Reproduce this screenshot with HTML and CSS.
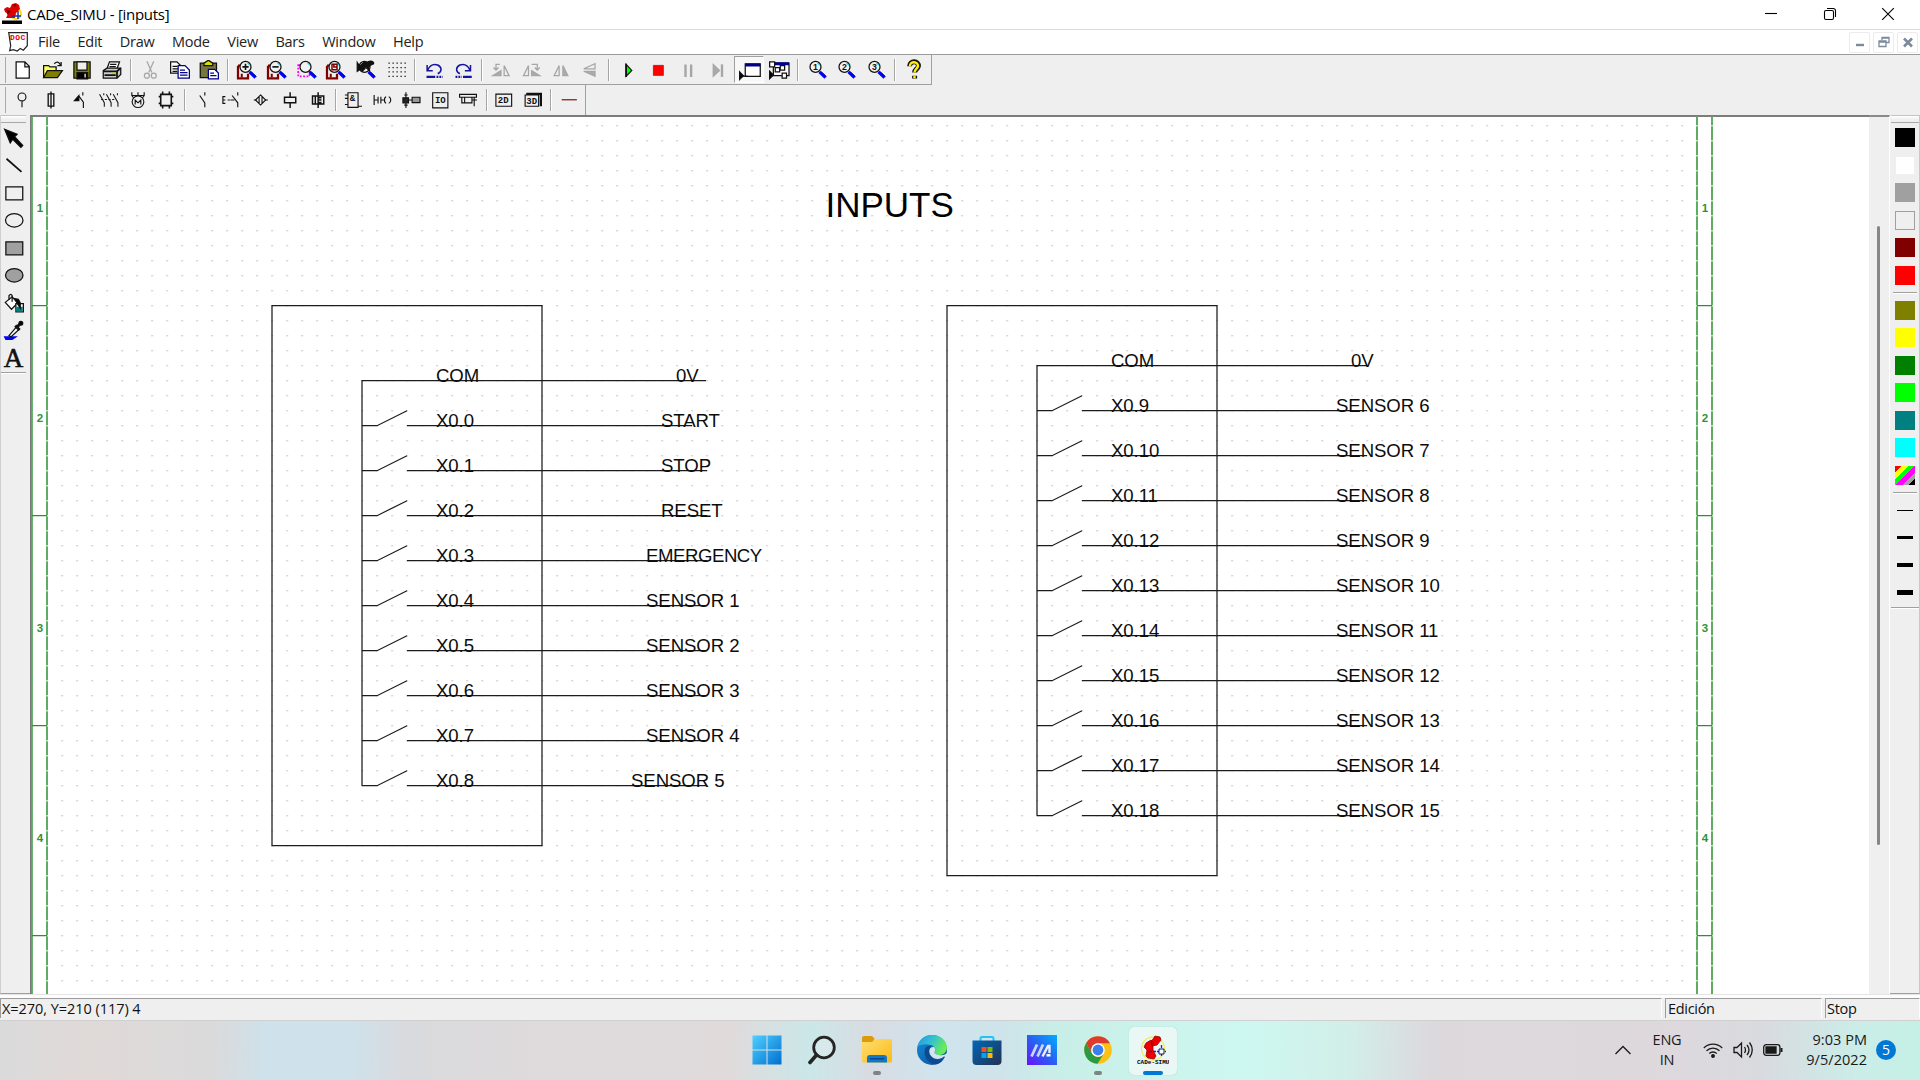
FILE: index.html
```html
<!DOCTYPE html>
<html lang="en">
<head>
<meta charset="utf-8">
<title>CADe_SIMU - [inputs]</title>
<link rel="stylesheet" href="styles.css">
</head>
<body>
<svg class="defs" width="0" height="0">
  <defs>
    <g id="lens"><path d="M10 9.500l4.800 4.600" stroke="#00f" stroke-width="2.400"/><path d="M11.500 9.500l4 3.800" stroke="#008" stroke-width=".8"/><circle cx="6.800" cy="5.500" r="4.400" fill="#f2f2f2"/><path d="M8.500 2.300l2 2" stroke="#0cc"/></g>
    <g id="sheet"><path d="M.8 4.500v10.200h8V11M.8 4.500H3" stroke="#800000" stroke-width="1.800"/><path d="M3.800 14v-3" stroke="#800000" stroke-width="1.600"/></g>
    <g id="switch"><path d="M0 0h15l30-15M45 0h285"/></g>
    <linearGradient id="win" x1="0" y1="0" x2="1" y2="1"><stop stop-color="#4fd0ff"/><stop offset="1" stop-color="#006fd0"/></linearGradient>
    <linearGradient id="folder" x1="0" y1="0" x2="1" y2="1"><stop stop-color="#ffdf70"/><stop offset="1" stop-color="#fbb917"/></linearGradient>
    <linearGradient id="edgeTop" x1="0" y1="0" x2="1" y2=".4"><stop stop-color="#2394dc"/><stop offset=".5" stop-color="#32bfd5"/><stop offset="1" stop-color="#69ec55"/></linearGradient>
    <linearGradient id="edgeLow" x1="0" y1="0" x2="1" y2="1"><stop stop-color="#168fdc"/><stop offset="1" stop-color="#0c4a91"/></linearGradient>
    <linearGradient id="store" x1="0" y1="0" x2="1" y2="1"><stop stop-color="#0067b8"/><stop offset="1" stop-color="#243251"/></linearGradient>
    <linearGradient id="my" x1="0" y1="1" x2="1" y2="0"><stop stop-color="#6a12ff"/><stop offset=".5" stop-color="#2860f2"/><stop offset="1" stop-color="#00aeff"/></linearGradient>
    <pattern id="dots" x="61.300" y="125.300" width="15" height="15" patternUnits="userSpaceOnUse"><rect width="1.600" height="1.400" fill="#c9c9c9"/></pattern>
  </defs>
</svg>

<header class="titlebar">
  <svg class="logo" width="20" height="21" viewBox="0 0 20 21"><circle cx="14" cy="11" r="5" fill="none" stroke="#fd0" stroke-width="2"/><path d="M2 6l3-2 3 1 2-4 4-1 3 2 1 4-4 4-1 5H4l2-4-3-2z" fill="#e00000"/><path d="M11 2l3-1-1 3zM5 7l4 1-4 4z" fill="#600"/><path d="M10 13h9M16 8v8" stroke="#13b" stroke-width="1.500"/><path d="M0 17.500h20V21H0z"/></svg>
  <span class="title-text">CADe_SIMU - [inputs]</span>
  <div class="win-controls">
    <svg width="14" height="14" viewBox="0 0 14 14"><path d="M1 6.500h12"/></svg>
    <svg width="14" height="14" viewBox="0 0 14 14"><rect x="1.500" y="3.500" width="9" height="9" rx="1.500"/><path d="M4 1.500h6.200a2.300 2.300 0 0 1 2.300 2.300V10"/></svg>
    <svg width="14" height="14" viewBox="0 0 14 14"><path d="M1.200 1.200l11.600 11.600M12.800 1.200L1.200 12.800"/></svg>
  </div>
</header>

<nav class="menubar">
  <svg class="doc" width="20" height="20" viewBox="0 0 20 20"><path d="M.7.7h18.600v13l-4 4.500-3-1.800-3 2.600-4-1.400-3.600 1 1-5z" fill="#fff" stroke="#222" stroke-width="1.200"/><text x="2" y="8">DOC</text></svg>
  <ul class="menu"><li>File</li><li>Edit</li><li>Draw</li><li>Mode</li><li>View</li><li>Bars</li><li>Window</li><li>Help</li></ul>
  <div class="mdi">
    <span><svg width="12" height="12" viewBox="0 0 12 12"><path d="M2 9h8" stroke-width="2.400"/></svg></span>
    <span><svg width="12" height="12" viewBox="0 0 12 12"><path d="M1 5h7v5.500H1zM1 6h7M4 4V1.500h7v5H8.500M4 2.200h7" stroke-width="1.300"/></svg></span>
    <span><svg width="12" height="12" viewBox="0 0 12 12"><path d="M2 2.500l8 8M10 2.500l-8 8" stroke-width="2.600"/></svg></span>
  </div>
</nav>

<section class="bar bar-main">
  <div class="tools">
    <i><svg viewBox="0 0 16 16"><path d="M2.500 1.500h7l3.500 3.500v9.500h-10.500zM9.500 1.500v4h3.500" fill="#fff"/></svg></i>
    <i><svg viewBox="0 0 16 16"><path d="M.5 14V4.500h4l1 1h5V8" fill="#ff6"/><path d="M.5 14l3-5.500h12l-4 5.500z" fill="#808000"/><path d="M9 3q3-3 5 1M14.500 1.500V4.500h-3"/></svg></i>
    <i><svg viewBox="0 0 16 16"><path d="M1.500 1.500h13v13h-13z" fill="#808000"/><path d="M4 1.500h8v6.500H4z" fill="#eee"/><path d="M4 10h8.500v5H4z" fill="#000"/><path d="M10.500 11v3" stroke="#fff"/></svg></i>
    <i><svg viewBox="0 0 16 16"><path d="M4 7l2-5.500h8L12 7" fill="#fff"/><path d="M6.500 3.500h5M6 5.200h5"/><path d="M1 8.500L4 6.500h11v5l-3 3H1z" fill="#ccc"/><path d="M1 9h11v5.500M12 9l3-2.500M2 12h9" stroke-width="1.400"/><path d="M8 10.500h3" stroke="#cc0"/></svg></i>
  </div>
  <b class="sep"></b>
  <div class="tools">
    <i><svg class="off" viewBox="0 0 16 16"><path d="M5.500 1l4 9M11 1L7 10"/><circle cx="5.500" cy="12.500" r="2"/><circle cx="11" cy="12.500" r="2"/></svg></i>
    <i><svg viewBox="0 0 16 16"><path d="M.5 1.500h5l3 3v6h-8zM2 5h4M2 7h5M2 9h4" fill="#fff"/><path d="M6.500 4.500h5.500l3.500 3.500v6.500h-9zM8 8h4M8 10h6M8 12h6" fill="#fff" stroke="#008"/></svg></i>
    <i><svg viewBox="0 0 16 16"><path d="M1 2.500h13V14H1z" fill="#77773b"/><path d="M4 4.500V2.500l3-2h1l3 2v2z" fill="#dd0"/><path d="M7.500 7.500h5l3 3v4.500h-8zM9 10.500h3M9 12.500h5" fill="#fff" stroke="#008"/></svg></i>
  </div>
  <b class="sep"></b>
  <div class="tools">
    <i><svg viewBox="0 0 16 16"><use href="#sheet"/><use href="#lens"/><path d="M4.300 5.500h5M6.800 3v5" stroke-width="1.300"/></svg></i>
    <i><svg viewBox="0 0 16 16"><use href="#sheet"/><use href="#lens"/><path d="M4.300 5.500h5" stroke-width="1.300"/></svg></i>
    <i><svg viewBox="0 0 16 16"><path d="M1 4h9v9H1z" stroke="#f0f" stroke-dasharray="1.500 1.200" stroke-width="1.400"/><use href="#lens"/></svg></i>
    <i><svg viewBox="0 0 16 16"><use href="#sheet"/><use href="#lens"/><path d="M4.800 3.300h4v4.400h-4zM6.300 3.500v2H9" stroke="#800000" stroke-width="1.200"/></svg></i>
    <i><svg viewBox="0 0 16 16"><use href="#lens"/><path d="M1 2v7l3-2 1 2 2-2-1-1c2-1 3 1 5 3l-1-3c1-3 5-2 4-4-1-2-4-1-5 0L6 2 3 5z" fill="#111"/></svg></i>
    <i><svg viewBox="0 0 16 16"><path d="M2 2.500h14M2 6h14M2 9.500h14M2 13h14" stroke-dasharray="1 2.200" stroke-width="1"/></svg></i>
  </div>
  <b class="sep"></b>
  <div class="tools">
    <i><svg class="navy" viewBox="0 0 16 16"><path d="M2.500 4v4.500h4.500M3 8c2-4.500 5-5 8-4 3.500 2 3.500 5 0 7"/><path d="M2 13.500h7" stroke-width="1.800"/><path d="M10 13.500h5" stroke-width="1.800" stroke-dasharray="1.500 .8"/></svg></i>
    <i><svg class="navy" viewBox="0 0 16 16"><path d="M14 4v4.500H9.500M13.500 8c-2-4.500-5-5-8-4-3.500 2-3.500 5 0 7"/><path d="M8 13.500h7" stroke-width="1.800"/><path d="M2 13.500h5" stroke-width="1.800" stroke-dasharray="1.500 .8"/></svg></i>
  </div>
  <b class="sep"></b>
  <div class="tools">
    <i><svg class="off" viewBox="0 0 16 16"><path d="M1.500 12.500h6.500v-4z" fill="#aaa"/><path d="M10.500 12.500v-8l4 8zM7 3.500H4v4M2 6l2 2 2-2"/></svg></i>
    <i><svg class="off" viewBox="0 0 16 16"><path d="M8.500 12.500h6.500l-6.500-4z" fill="#aaa"/><path d="M6 12.500v-8l-4 8zM8.500 3.500H13v4M11 6l2 2 2-2"/></svg></i>
    <i><svg class="off" viewBox="0 0 16 16"><path d="M6.500 12.500v-8l-4 8z"/><path d="M9.500 12.500v-8l4 8z" fill="#aaa"/></svg></i>
    <i><svg class="off" viewBox="0 0 16 16"><path d="M12 7V3L3 7z"/><path d="M12 9v4L3 9z" fill="#aaa"/></svg></i>
  </div>
  <b class="sep"></b>
  <div class="tools">
    <i><svg viewBox="0 0 16 16"><path d="M6.500 3.500l4.500 4.800L6.500 13z" fill="#0f0"/><path d="M6.500 3v10.500" stroke-width="1.400"/></svg></i>
    <i><svg viewBox="0 0 16 16"><path d="M4.300 4.300h8v8h-8z" fill="#f00" stroke="#c00" stroke-width=".6"/></svg></i>
    <i><svg class="off" viewBox="0 0 16 16"><path d="M6 3.500v10M10.500 3.500v10" stroke-width="1.900"/></svg></i>
    <i><svg class="off" viewBox="0 0 16 16"><path d="M5 3.500l5 4.800-5 4.700z" fill="#aaa"/><path d="M12 3.500v10" stroke-width="1.900"/></svg></i>
  </div>
  <div class="tools modes">
    <i class="pressed"><svg viewBox="0 0 16 16"><path d="M5 3h12v10H5z" fill="#fff"/><path d="M5 4h12" stroke="#008" stroke-width="2.400"/><path d="M.5 9.500l3 3-3 3z" fill="#000"/><path d="M2.500 13H7"/></svg></i>
    <i><svg viewBox="0 0 16 16"><path d="M3.500 2.500h12.500v10H3.500z" fill="#fff"/><path d="M3.500 3h12.500" stroke="#008" stroke-width="2.400"/><path d="M.5 1.500h4v4h-4zM5 6h3.500v3.500H5zM9 4.500h3.500V8H9zM10.500 10.500h3.500v4h-3.500z" fill="#fff"/><path d="M.5 9l3 3-3 3z" fill="#000"/></svg></i>
  </div>
  <b class="sep"></b>
  <div class="tools">
    <i><svg viewBox="0 0 16 16"><use href="#lens"/><text x="4.700" y="8.200">1</text></svg></i>
    <i><svg viewBox="0 0 16 16"><use href="#lens"/><text x="4.700" y="8.200">2</text></svg></i>
    <i><svg viewBox="0 0 16 16"><use href="#lens"/><text x="4.700" y="8.200">3</text></svg></i>
  </div>
  <b class="sep"></b>
  <div class="tools">
    <i><svg viewBox="0 0 16 16"><path d="M4.500 5c0-5 7.500-4.500 7 0-.3 2-3 2.500-3 5M8.500 12.500v2.200" stroke-width="4"/><path d="M4.700 5c0-4.500 6.800-4 6.500 0-.3 2-2.800 2.500-2.800 5M8.400 12.500v2" stroke="#fe0" stroke-width="1.900"/></svg></i>
  </div>
</section>

<section class="bar bar-parts">
  <div class="tools">
    <i><svg viewBox="0 0 16 16"><circle cx="8" cy="5.300" r="3.500"/><path d="M8 9v5.500"/></svg></i>
    <i><svg viewBox="0 0 16 16"><path d="M5.500 2.500h5v11h-5zM8 .5V15.500" stroke-width="1.200"/></svg></i>
    <i><svg viewBox="0 0 16 16"><path d="M10.500 1v3M7 4.500l4 5.500v5"/><path d="M7 4v4.500H3z" fill="#000"/></svg></i>
    <i><svg class="wide" viewBox="0 0 20 16"><path d="M5.500 1.500v2M1.500 2.500l4.500 8v4M12 1.500v2M8 2.500l4.500 8v4M18.500 1.500v2M14.500 2.500l4.500 8v4"/><path d="M3 7.500h13" stroke-dasharray="2 1.500"/></svg></i>
    <i><svg viewBox="0 0 16 16"><circle cx="8" cy="9.500" r="5.200"/><path d="M2.500 1v3l1.500 2M8 1v3.500M13.500 1v3l-1.500 2M2.500 4h11M5.500 12V8L8 10.500 10.500 8v4"/></svg></i>
    <i><svg viewBox="0 0 16 16"><path d="M3.300 3h9.400v10H3.300zM5 .5V3M11 .5V3M5 13v2.500M11 13v2.500M1.500 5H3M13 5h1.500M1.500 11H3M13 11h1.500" stroke-width="1.400"/></svg></i>
  </div>
  <b class="sep"></b>
  <div class="tools">
    <i><svg viewBox="0 0 16 16"><path d="M10.500 1v3M6 4l4.500 6.500v4"/></svg></i>
    <i><svg viewBox="0 0 16 16"><path d="M3 5H.8v6H3M.8 8H3M5 8h2M14 1v3M9 4l5 6.500v4M7.500 8h3.500"/></svg></i>
    <i><svg viewBox="0 0 16 16"><path d="M2.500 8H5M12.500 8H15"/><path d="M8.500 3.500L13 8l-4.500 4.500L4 8zM7.200 5v6M9.800 5v6"/></svg></i>
    <i><svg viewBox="0 0 16 16"><path d="M4 5.500h10v5H4zM9 1v4.500M9 10.500v4.500" stroke-width="1.300"/></svg></i>
    <i><svg viewBox="0 0 16 16"><path d="M4 4.500h10v7H4zM6.500 4.500v7M9 1v14M9 6h3M9 8h3M9 10.300h3" stroke-width="1.300"/></svg></i>
  </div>
  <b class="sep"></b>
  <div class="tools">
    <i><svg viewBox="0 0 16 16"><path d="M3.500 1.500h9v13h-9zM.8 3.500h2.700M.8 6.500h2.700M.8 12h2.700M12.500 13.500H16"/><text class="fine" x="5" y="8.500">&amp;</text></svg></i>
    <i><svg viewBox="0 0 16 16"><path d="M1 3.500v9M1 8h3.500M4.500 5v6M7 5v6M7 8h3"/><path d="M11.500 5l-1.200 1.500v3l1.200 1.500M14 5q1.800 1 1.800 3t-1.800 3"/></svg></i>
    <i><svg viewBox="0 0 16 16"><path d="M3.500 1v14M2 3.500h3M2 12.500h3M6 8h3"/><path d="M.8 6h5v4.500h-5z" fill="#222"/><path d="M9 5.500h7v4.800H9z" fill="#999"/></svg></i>
    <i><svg viewBox="0 0 16 16"><path d="M1.500 1.500h13.500v13.500H1.500z"/><text class="fine" x="3.500" y="11">IO</text></svg></i>
    <i><svg viewBox="0 0 16 16"><path d="M.5 3h15v2.500H.5zM2.500 5.500v5h9v-5M5 5.500v5M11.500 8h4.500M13.500 5.500v8"/></svg></i>
  </div>
  <b class="sep"></b>
  <div class="tools">
    <i><svg viewBox="0 0 16 16"><path d="M.8 2.800h14v10.700H.8z"/><text class="fine" x="2.500" y="11">2D</text></svg></i>
    <i><svg viewBox="0 0 16 16"><path d="M1 3.500h12v10H1z"/><path d="M2 2.500h13v11" stroke-width="2"/><text class="fine" x="2" y="11.500">3D</text></svg></i>
  </div>
  <b class="sep"></b>
  <div class="tools"><i><svg viewBox="0 0 16 16"><path d="M1.500 7.800h13.500" stroke="#800000"/></svg></i></div>
</section>

<main class="workspace">
  <aside class="palette draw">
    <div class="grip"></div>
    <i><svg viewBox="0 0 16 16"><path d="M.5 1l10 4-2 2 6.500 7-1.500 1.500-6.500-6.500-2 3z" fill="#000"/></svg></i>
    <i><svg viewBox="0 0 16 16"><path d="M2 3l12 10.500" stroke-width="1.400"/></svg></i>
    <i><svg viewBox="0 0 16 16"><path d="M1.500 3h13.500v10.500H1.500z"/></svg></i>
    <i><svg viewBox="0 0 16 16"><ellipse cx="8.200" cy="8.200" rx="7" ry="5.400"/></svg></i>
    <i><svg viewBox="0 0 16 16"><path d="M1.500 3h13.500v10.500H1.500z" fill="#a0a0a0"/></svg></i>
    <i><svg viewBox="0 0 16 16"><ellipse cx="8.200" cy="8.200" rx="7" ry="5.400" fill="#a0a0a0"/></svg></i>
    <i><svg viewBox="0 0 16 16"><path d="M1 7.500l5.500-4.500 4.500 5-5 5z" fill="#fff"/><path d="M4 5.500V2q1.500-2 2.500 0v5"/><path d="M9.500 8.500h6v6.500h-6z" fill="#fff"/><path d="M10 11h5v3.500H9z" fill="#008080" stroke="none"/><path d="M8.500 4.500l3 .5 1.500 3v4l-2-3z" fill="#000"/></svg></i>
    <i><svg viewBox="0 0 16 16"><path d="M.5 13.500h9l-3 2h-5z" fill="#00f" stroke="#00f"/><path d="M4 12.500l6-7 2 2-6.500 6z" fill="#fff"/><path d="M9 4.500l3.500 3.500M10.500 5.500L14 2" stroke-width="2.300"/><circle cx="13.500" cy="2.500" r="1.500" fill="#000"/></svg></i>
    <i class="letter">A</i>
    <div class="end"></div>
  </aside>

  <svg class="sheet" viewBox="30 115 1839 879" width="1839" height="879">
    <path class="edge" d="M30.500 994V116H1869"/>
    <g transform="translate(0 -.3)">
      <rect x="55" y="120" width="1635" height="870" fill="url(#dots)"/>
      <g class="frame">
        <path d="M32 117v878"/>
        <path class="under" d="M47 117v878M1697 117v878M1712 117v878"/>
        <path class="dash" d="M47 117v878M1697 117v878M1712 117v878"/>
        <path class="tick" d="M32 306h15M32 516h15M32 726h15M32 936h15M1697 306h15M1697 516h15M1697 726h15M1697 936h15"/>
      </g>
      <g class="rows">
        <text x="40" y="212.300">1</text><text x="40" y="422.300">2</text><text x="40" y="632.300">3</text><text x="40" y="842.300">4</text>
        <text x="1705" y="212.300">1</text><text x="1705" y="422.300">2</text><text x="1705" y="632.300">3</text><text x="1705" y="842.300">4</text>
      </g>
      <g class="wire">
        <path d="M272 306h270v540H272zM362 786V381H706"/>
        <path d="M362 426h15l30-15M407 426h285"/>
        <use href="#switch" x="362" y="471"/><use href="#switch" x="362" y="516"/><use href="#switch" x="362" y="561"/><use href="#switch" x="362" y="606"/><use href="#switch" x="362" y="651"/><use href="#switch" x="362" y="696"/><use href="#switch" x="362" y="741"/><use href="#switch" x="362" y="786"/>
        <path d="M692 471h15M692 516h15M692 561h15M692 606h15M692 651h15M692 696h15M692 741h15M692 786h15"/>
        <path d="M947 306h270v570H947zM1037 816V366h330"/>
        <use href="#switch" x="1037" y="411"/><use href="#switch" x="1037" y="456"/><use href="#switch" x="1037" y="501"/><use href="#switch" x="1037" y="546"/><use href="#switch" x="1037" y="591"/><use href="#switch" x="1037" y="636"/><use href="#switch" x="1037" y="681"/><use href="#switch" x="1037" y="726"/><use href="#switch" x="1037" y="771"/><use href="#switch" x="1037" y="816"/>
      </g>
      <text class="heading" x="825.500" y="217.800">INPUTS</text>
      <g class="label">
        <text x="436" y="382.800">COM</text><text x="676" y="382.800">0V</text>
        <text x="436" y="427.800">X0.0</text><text x="661" y="427.800">START</text>
        <text x="436" y="472.800">X0.1</text><text x="661" y="472.800">STOP</text>
        <text x="436" y="517.800">X0.2</text><text x="661" y="517.800">RESET</text>
        <text x="436" y="562.800">X0.3</text><text class="tight" x="646" y="562.800">EMERGENCY</text>
        <text x="436" y="607.800">X0.4</text><text x="646" y="607.800">SENSOR 1</text>
        <text x="436" y="652.800">X0.5</text><text x="646" y="652.800">SENSOR 2</text>
        <text x="436" y="697.800">X0.6</text><text x="646" y="697.800">SENSOR 3</text>
        <text x="436" y="742.800">X0.7</text><text x="646" y="742.800">SENSOR 4</text>
        <text x="436" y="787.800">X0.8</text><text x="631" y="787.800">SENSOR 5</text>
        <text x="1111" y="367.800">COM</text><text x="1351" y="367.800">0V</text>
        <text x="1111" y="412.800">X0.9</text><text x="1336" y="412.800">SENSOR 6</text>
        <text x="1111" y="457.800">X0.10</text><text x="1336" y="457.800">SENSOR 7</text>
        <text x="1111" y="502.800">X0.11</text><text x="1336" y="502.800">SENSOR 8</text>
        <text x="1111" y="547.800">X0.12</text><text x="1336" y="547.800">SENSOR 9</text>
        <text x="1111" y="592.800">X0.13</text><text x="1336" y="592.800">SENSOR 10</text>
        <text x="1111" y="637.800">X0.14</text><text x="1336" y="637.800">SENSOR 11</text>
        <text x="1111" y="682.800">X0.15</text><text x="1336" y="682.800">SENSOR 12</text>
        <text x="1111" y="727.800">X0.16</text><text x="1336" y="727.800">SENSOR 13</text>
        <text x="1111" y="772.800">X0.17</text><text x="1336" y="772.800">SENSOR 14</text>
        <text x="1111" y="817.800">X0.18</text><text x="1336" y="817.800">SENSOR 15</text>
      </g>
    </g>
  </svg>

  <div class="scroll"><div class="thumb"></div></div>

  <aside class="palette colors">
    <div class="grip"></div>
    <i><b class="sw black"></b></i><i><b class="sw white"></b></i><i><b class="sw gray"></b></i><i><b class="sw none"></b></i><i><b class="sw maroon"></b></i><i><b class="sw red"></b></i>
    <div class="rule"></div>
    <i><b class="sw olive"></b></i><i><b class="sw yellow"></b></i><i><b class="sw green"></b></i><i><b class="sw lime"></b></i><i><b class="sw teal"></b></i><i><b class="sw cyan"></b></i><i><b class="sw multi"></b></i>
    <div class="rule"></div>
    <i><b class="ln l1"></b></i><i><b class="ln l2"></b></i><i><b class="ln l3"></b></i><i><b class="ln l4"></b></i>
    <div class="end"></div>
  </aside>
</main>

<footer class="status">
  <div class="pane coords">X=270, Y=210 (117) 4</div>
  <div class="pane mode">Edición</div>
  <div class="pane state">Stop</div>
</footer>

<div class="taskbar">
  <div class="apps">
    <div class="app"><svg width="30" height="30" viewBox="0 0 30 30"><path d="M.5.5h14v14H.5zM15.500.5h14v14h-14zM.5 15.500h14v14H.5zM15.500 15.500h14v14h-14z" fill="url(#win)"/></svg></div>
    <div class="app"><svg width="30" height="30" viewBox="0 0 30 30"><circle cx="17" cy="12.500" r="10.300" fill="#ffffff30" stroke="#252525" stroke-width="2.800"/><path d="M9.500 20L3 27.500" stroke="#252525" stroke-width="3.600" stroke-linecap="round"/></svg></div>
    <div class="app running"><svg width="30" height="30" viewBox="0 0 30 30"><path d="M0 3a2 2 0 0 1 2-2h8l3 3h-1v5H0z" fill="#dc9b0b"/><path d="M0 7h10l3-3h15a2 2 0 0 1 2 2v20a1.500 1.500 0 0 1-1.500 1.500h-27A1.500 1.500 0 0 1 0 26z" fill="url(#folder)"/><path d="M5 27.500V23a3 3 0 0 1 3-3h14a3 3 0 0 1 3 3v4.500z" fill="#0f78c8"/><path d="M8.500 23.800h13" stroke="#07488a" stroke-width="1.500" stroke-linecap="round"/></svg></div>
    <div class="app"><svg width="30" height="30" viewBox="0 0 30 30"><circle cx="15" cy="15" r="15" fill="url(#edgeLow)"/><path d="M.3 12C2 4 8 0 15 0c9 0 15 6 15 12.500 0 5-4 7.500-8 7.500-3 0-5-1-4.500-2.500 1.500-1.800 1-6-3.500-7.500C9 8.500 3 9 .3 12z" fill="url(#edgeTop)"/><path d="M17 12c-5-.5-6 5-3 9 3 3.500 9 4 12.500.8 1-.8 1.800 0 1.200 1L25 26l5 4V18c-2 2-5 2.500-8 2-4-.5-5-2-4.300-3 .8-1.500.5-4-.7-5z" fill="#d3e4ee"/><path d="M8 14c-2 7 3 15 11 15.500 3-.5 6-3 8-6-7 3.500-15-.5-15-7.500 0-3 2-5 4-5-4-1-7 0-8 3z" fill="#0d4b90"/></svg></div>
    <div class="app"><svg width="30" height="30" viewBox="0 0 30 30"><path d="M8.500 7V3.500A1.500 1.500 0 0 1 10 2h10a1.500 1.500 0 0 1 1.500 1.500V7" fill="none" stroke="#20c5f5" stroke-width="2"/><path d="M.5 5.500h29V26a4 4 0 0 1-4 4h-21a4 4 0 0 1-4-4z" fill="url(#store)"/><path d="M9.500 12h5v5h-5z" fill="#f25022"/><path d="M15.500 12h5v5h-5z" fill="#7fba00"/><path d="M9.500 18h5v5h-5z" fill="#00a4ef"/><path d="M15.500 18h5v5h-5z" fill="#ffb900"/></svg></div>
    <div class="app"><svg width="30" height="30" viewBox="0 0 30 30"><path d="M0 0h30v30H0z" fill="url(#my)"/><path d="M4.500 21.500L10 9.500M10.500 21.500L16 9.500" stroke="#c9d5ff" stroke-width="2.800"/><path d="M15.500 21.500L21 11h1.500v7" fill="none" stroke="#eef" stroke-width="2.400"/><path d="M19.500 20.300h4" stroke="#fff" stroke-width="2.500"/></svg></div>
    <div class="app running"><svg width="30" height="30" viewBox="0 0 30 30"><circle cx="15" cy="15" r="13.800" fill="#fbc116"/><path d="M3 8.200A13.800 13.800 0 0 1 27 8.200H15a7 7 0 0 0-6 10.300z" fill="#df3a2e"/><path d="M3 8.200A13.800 13.800 0 0 0 14.500 28.800L21 18.500A7 7 0 0 1 9 18.500z" fill="#2a9a45"/><circle cx="15" cy="15" r="6.800" fill="#fff"/><circle cx="15" cy="15" r="5.400" fill="#3c7ef0"/></svg></div>
    <div class="app active"><svg width="32" height="30" viewBox="0 0 32 30"><circle cx="16" cy="13.500" r="11.500" fill="none" stroke="#f2ec55" stroke-width="1.300"/><path d="M9 8l5-3 2 2v8l3 6-2 3-6-1-2-2 1-6-3-3zM18 1l5 1 1 3-4 5-5 1-1-4z" fill="#e00" stroke="#900" stroke-width=".8"/><path d="M12 16.500h17M24.500 10v11" stroke="#22c" stroke-width="1.300" stroke-dasharray="3 1"/><path d="M22 14h5v5h-5z" fill="#fff" stroke="#118"/><text x="0" y="29">CADe-SIMU</text></svg></div>
  </div>
  <div class="tray">
    <svg class="chev" width="18" height="12" viewBox="0 0 18 12"><path d="M1.500 10L9 2.500l7.500 7.500"/></svg>
    <div class="lang">ENG<br>IN</div>
    <svg class="wifi" width="20" height="16" viewBox="0 0 20 16"><path d="M.8 6a13 13 0 0 1 18.400 0M3.500 8.800a9.200 9.200 0 0 1 13 0M6.300 11.500a5.300 5.300 0 0 1 7.400 0"/><circle cx="10" cy="14" r="1.300" fill="#1a1a1a"/></svg>
    <svg class="vol" width="20" height="18" viewBox="0 0 20 18"><path d="M1 6.500h3L8.500 2v14L4 11.500H1zM11.500 6q2 3 0 6M14 4q4 5 0 10M16.500 1.500q5.500 7.500 0 15"/></svg>
    <svg class="bat" width="20" height="12" viewBox="0 0 20 12"><rect x=".7" y=".7" width="16.200" height="10.600" rx="2.500"/><path d="M3 3h10v6H3z" fill="#1a1a1a"/><path d="M18.500 4v4" stroke-width="2"/></svg>
    <div class="clock">9:03 PM<br>9/5/2022</div>
    <div class="badge">5</div>
  </div>
</div>
</body>
</html>
```
FILE: styles.css
```css
* { box-sizing: border-box; }
body {
  margin: 0;
  width: 1920px;
  height: 1080px;
  overflow: hidden;
  display: flex;
  flex-direction: column;
  background: #efefef;
  color: #111;
  font: 15px "Open Sans", "Noto Sans", sans-serif;
}
svg { display: block; flex: none; }
i { font-style: normal; }

.titlebar {
  height: 30px;
  flex: none;
  display: flex;
  align-items: center;
  padding: 0 25px 2px 2px;
  background: #fff;
  border-bottom: 1px solid #dcdcdc;
}
.title-text { margin-left: 5px; font-size: 15px; letter-spacing: -.28px; color: #000; }
.win-controls { margin-left: auto; display: flex; gap: 44.5px; }
.win-controls svg { fill: none; stroke: #000; stroke-width: 1.1; }

.menubar {
  height: 25px;
  flex: none;
  display: flex;
  align-items: center;
  padding: 0 2px 0 8px;
  background: #fff;
  border-bottom: 1px solid #9c9c9c;
}
.doc text { font: bold 8px "Liberation Mono", monospace; fill: #e00; letter-spacing: .5px; }
.menu { list-style: none; display: flex; gap: 17.5px; margin: 0 0 2px 10px; padding: 0; font-size: 14.5px; letter-spacing: -.25px; color: #222; }
.mdi { margin-left: auto; display: flex; gap: 3px; }
.mdi span { width: 21px; height: 21px; display: grid; place-items: center; border: 1px solid #ececec; border-radius: 2px; }
.mdi svg { fill: none; stroke: #7c8a9c; }

.bar { height: 30px; flex: none; display: flex; align-items: center; align-self: flex-start; border-right: 1px solid #a0a0a0; padding-left: 5px; }
.bar::before { content: ""; width: 2px; height: 26px; border-left: 1px solid #aaa; }
.bar-main { width: 932px; border-bottom: 1px solid #a0a0a0; }
.bar-parts { width: 586px; }
.tools { display: flex; }
.tools i { width: 29.75px; height: 27px; display: grid; place-items: center; }
.bar-parts .tools i { width: 28.8px; }
.tools svg, .draw svg { width: 20px; height: 20px; fill: none; stroke: #111; stroke-width: 1; overflow: visible; }
.bar-parts .tools svg { width: 18px; height: 18px; }
.bar-parts .tools svg.wide { width: 21px; }
.tools svg.off { stroke: #a6a6a6; }
.tools svg.navy { stroke: #1414a0; stroke-width: 1.2; }
.tools text { font: bold 7px "Liberation Sans", sans-serif; fill: #111; stroke: none; }
.tools text.fine { font: bold 8px "Liberation Mono", monospace; }
.sep { flex: none; width: 8px; height: 22px; background: linear-gradient(90deg, transparent 3px, #a6a6a6 3px 4.2px, #fff 4.2px 5.2px, transparent 5.2px); }
.bar-parts .sep { width: 7px; }
.modes { margin-left: 2px; }
.tools .pressed { background: #f8f8f8; border: 1px solid #a0a0a0; border-right-color: #fff; border-bottom-color: #fff; }

.workspace { height: 879px; flex: none; display: flex; }
.palette { display: flex; flex-direction: column; align-items: center; }
.palette i { height: 27.5px; width: 26px; display: grid; place-items: center; }
.palette .grip { align-self: stretch; height: 8px; margin-bottom: 1px; border-top: 1px solid #c4c4c4; border-bottom: 1px solid #a8a8a8; background: linear-gradient(#fff, #efefef 60%); }
.palette .end { align-self: stretch; height: 2px; border-top: 1px solid #a0a0a0; border-bottom: 1px solid #fff; }
.draw { width: 30px; padding-right: 4px; border-bottom: 1px solid #a0a0a0; border-left: 1px solid #d0d0d0; }
.draw .letter { font: 27px/26px "Liberation Serif", serif; -webkit-text-stroke: .6px #111; color: #111; }

.sheet { background: #fff; }
.edge { fill: none; stroke: #7c7c7c; stroke-width: 2; }
.frame { fill: none; stroke: #45a049; stroke-width: 1.6; }
.under { stroke: #b9d8ba; }
.dash { stroke-dasharray: 13.6 1.4; stroke-dashoffset: 5.3; }
.tick { stroke: #2f8f33; stroke-width: 1.3; }
.rows { font: bold 11.5px "Liberation Sans", Arial, sans-serif; fill: #2f9436; text-anchor: middle; }
.wire { fill: none; stroke: #1c1c1c; stroke-width: 1.25; }
.heading { font: 35px "Liberation Sans", Arial, sans-serif; fill: #000; }
.label { font: 18.6px "Liberation Sans", Arial, sans-serif; letter-spacing: -.08px; fill: #0c0c0c; }
.tight { letter-spacing: -.45px; }

.scroll { width: 21px; border-top: 2px solid #8a8a8a; border-right: 1px solid #fff; padding: 109px 0 0 8px; background: #efefef; }
.thumb { width: 3px; height: 619px; border-radius: 2px; background: #868686; }

.colors { width: 30px; padding: 0 0 0 1px; border-bottom: 1px solid #a0a0a0; border-right: 1px solid #c8c8c8; }
.rule { width: 24px; height: 2px; margin: 3px 0 2.5px; border-top: 1px solid #a0a0a0; border-bottom: 1px solid #fff; }
.sw { width: 20px; height: 19px; }
.black { background: #000; }
.white { background: #fff; width: 18px; height: 17px; }
.gray { background: #a0a0a0; }
.none { border: 1px solid #a0a0a0; }
.maroon { background: #800000; }
.red { background: #f00; }
.olive { background: #808000; }
.yellow { background: #ff0; }
.green { background: #008000; }
.lime { background: #0f0; }
.teal { background: #008080; }
.cyan { background: #0ff; }
.multi { background: linear-gradient(135deg, #f00 0 17%, #ff0 17% 34%, #0f0 34% 50%, #f0f 50% 68%, #a0a0a0 68% 84%, #000 84%); }
.ln { width: 16px; background: #000; }
.l1 { height: 1px; }
.l2 { height: 3px; }
.l3 { height: 4px; }
.l4 { height: 5px; }

.status { height: 27px; flex: none; display: flex; gap: 3px; padding: 4px 0 2px; background: linear-gradient(#e4e4e4 1px, #fdfdfd 1px 4px, #efefef 4px); border-bottom: 1px solid #d0d0d0; }
.pane { border-top: 1px solid #9c9c9c; border-left: 1px solid #9c9c9c; border-right: 1px solid #fff; padding-left: 2px; font-size: 14.5px; line-height: 20px; letter-spacing: -.3px; background: #efefef; }
.coords { width: 1662px; padding-left: 1px; letter-spacing: -.05px; }
.mode { width: 157px; }
.state { flex: 1; padding-left: 1px; }

.taskbar {
  height: 59px;
  flex: none;
  display: flex;
  align-items: center;
  padding-left: 743px;
  background: linear-gradient(92deg, #dadadb 0, #e0d9d8 85px, #dadadb 215px, #cfe1ea 265px, #cfe1ea 355px, #d9dade 405px, #dfdadb 540px, #e0dadb 730px, #cbe7e8 810px, #d8dce2 870px, #d0e4ee 940px, #cfe3ea 1000px, #c8efe7 1060px, #cdf8f1 1250px, #d2eee8 1350px, #dcd9dd 1430px, #ded8dc 1640px, #d9dadf 1760px, #cbede8 1860px, #c4f0e5 1920px);
}
.apps { display: flex; gap: 7.1px; }
.app { width: 48px; height: 48px; position: relative; display: grid; place-items: center; }
.app svg { margin-top: -2px; }
.app.running::after, .app.active::after { content: ""; position: absolute; bottom: 0; left: 20px; width: 8px; height: 4px; border-radius: 2px; background: #7f8384; }
.app.active { background: #eaf8f5; border-radius: 5px; box-shadow: 0 0 1px #9fbdb6; }
.app.active::after { left: 14px; width: 20px; background: #0078d4; }
.app.active text { font: bold 6px "Liberation Mono", monospace; fill: #000; }
.tray { margin-left: auto; display: flex; align-items: center; padding: 0 24px 2px 0; color: #1a1a1a; line-height: 20px; font-size: 14.5px; letter-spacing: -.25px; }
.tray svg { fill: none; stroke: #1a1a1a; stroke-width: 1.3; }
.lang { width: 34px; margin: 0 19px 0 18px; text-align: center; }
.vol { margin: 0 10px; }
.clock { width: 84px; text-align: right; letter-spacing: .05px; }
.badge { width: 20px; height: 20px; margin-left: 9px; border-radius: 50%; background: #0078d4; color: #fff; text-align: center; font-size: 14px; }
```
